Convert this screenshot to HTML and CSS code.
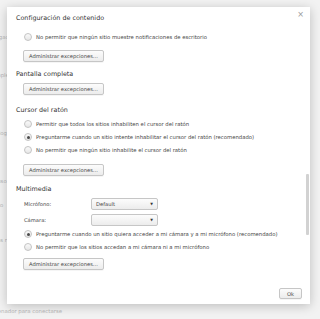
FILE: index.html
```html
<!DOCTYPE html>
<html lang="es">
<head>
    <meta charset="UTF-8">
    <meta name="viewport" content="width=device-width, initial-scale=1.0">
    <title>Configuración de contenido</title>
    <link rel="stylesheet" href="styles.css">
</head>
<body>
    <div class="page">
        <div class="page-line l1">Configuración de navegación</div>
        <div class="page-line l2">Pantalla completa</div>
        <div class="page-line l3">Bloquear registro de log</div>
        <div class="page-line l4">Acceso al uso</div>
        <div class="page-line l5">Acceso directo</div>
        <div class="page-line l6">Sitios permitidos r</div>
        <div class="page-line l7">Permitir a los sitios usar el ordenador para conectarse</div>
    </div>

    <div class="dialog">
        <div class="title">Configuración de contenido</div>
        <span class="close">×</span>

        <div class="section first">
            <label class="radio-row"><span class="radio"></span>No permitir que ningún sitio muestre notificaciones de escritorio</label>
            <button class="btn">Administrar excepciones...</button>
        </div>

        <div class="section fullscreen">
            <div class="heading">Pantalla completa</div>
            <button class="btn">Administrar excepciones...</button>
        </div>

        <div class="section cursor">
            <div class="heading">Cursor del ratón</div>
            <div class="radios">
                <label class="radio-row"><span class="radio"></span>Permitir que todos los sitios inhabiliten el cursor del ratón</label>
                <label class="radio-row"><span class="radio checked"></span>Preguntarme cuando un sitio intente inhabilitar el cursor del ratón (recomendado)</label>
                <label class="radio-row"><span class="radio"></span>No permitir que ningún sitio inhabilite el cursor del ratón</label>
            </div>
            <button class="btn">Administrar excepciones...</button>
        </div>

        <div class="section media">
            <div class="heading">Multimedia</div>
            <div class="field">
                <span class="field-label">Micrófono:</span>
                <div class="select"><span>Default</span><span class="arrow">▼</span></div>
            </div>
            <div class="field">
                <span class="field-label">Cámara:</span>
                <div class="select"><span></span><span class="arrow">▼</span></div>
            </div>
            <div class="radios">
                <label class="radio-row"><span class="radio checked"></span>Preguntarme cuando un sitio quiera acceder a mi cámara y a mi micrófono (recomendado)</label>
                <label class="radio-row"><span class="radio"></span>No permitir que los sitios accedan a mi cámara ni a mi micrófono</label>
            </div>
            <button class="btn">Administrar excepciones...</button>
        </div>

        <div class="footer">
            <button class="btn ok">Ok</button>
        </div>

        <div class="scroll-thumb"></div>
    </div>
</body>
</html>
```

FILE: styles.css
```css
body {
    margin: 0;
    background: #f2f2f2;
    font-family: "DejaVu Sans", sans-serif;
    width: 320px;
    height: 319px;
    overflow: hidden;
    position: relative;
}

.page {
    color: #b8b8b8;
    font-size: 5.4px;
    line-height: 8px;
}

.page-line {
    white-space: nowrap;
}

.l1 { margin: 33px 0 0 -62px; }
.l2 { margin: 30px 0 0 -34px; }
.l3 { margin: 50px 0 0 -58px; }
.l4 { margin: 40px 0 0 -30px; }
.l5 { margin: 16px 0 0 -36px; }
.l6 { margin: 27px 0 0 -42px; }
.l7 { margin: 63px 0 0 -84px; }

.dialog {
    position: absolute;
    left: 7px;
    top: 7px;
    width: 303px;
    height: 297px;
    background: #fff;
    box-shadow: 0 2px 10px rgba(0,0,0,0.22);
    padding: 0 0 0 9px;
    box-sizing: border-box;
    color: #333;
}

.title {
    margin-top: 6px;
    font-size: 6.4px;
    line-height: 10px;
    color: #333;
}

.close {
    position: absolute;
    right: 6px;
    top: 3px;
    font-size: 8px;
    color: #999;
}

.section {
    display: flex;
    flex-direction: column;
    align-items: flex-start;
}

.section.first {
    margin-top: 9px;
}

.heading {
    font-size: 6.4px;
    line-height: 10px;
}

.fullscreen .heading { margin-top: 7px; }
.cursor .heading { margin-top: 10px; }
.media .heading { margin-top: 8px; }

.radio-row {
    display: flex;
    align-items: center;
    height: 10px;
    padding-left: 8px;
    font-size: 5.3px;
    color: #444;
    white-space: nowrap;
}

.radio {
    width: 6px;
    height: 6px;
    border: 1px solid #c4c4c4;
    border-radius: 50%;
    background: linear-gradient(#fafafa, #e6e6e6);
    margin-right: 4px;
    box-sizing: content-box;
    display: flex;
    align-items: center;
    justify-content: center;
}

.radio.checked::after {
    content: "";
    width: 3px;
    height: 3px;
    border-radius: 50%;
    background: #4a4a4a;
}

.radios {
    display: flex;
    flex-direction: column;
    gap: 3px;
    margin-top: 4px;
}

.first .radio-row + .btn {
    margin-top: 8px;
}

.btn {
    font-family: "DejaVu Sans", sans-serif;
    font-size: 5.2px;
    color: #444;
    height: 12px;
    padding: 0 5px;
    margin-left: 7px;
    border: 1px solid #c6c6c6;
    border-radius: 2px;
    background: linear-gradient(#fcfcfc, #ececec);
    box-shadow: 0 1px 0 rgba(0,0,0,0.04);
}

.heading + .btn {
    margin-top: 4px;
}

.cursor .radios + .btn {
    margin-top: 9px;
}

.media .radios + .btn {
    margin-top: 6px;
}

.field {
    display: flex;
    align-items: center;
    height: 12px;
    margin-top: 4px;
    padding-left: 8px;
}

.field + .field {
    margin-top: 4px;
}

.field-label {
    width: 67px;
    font-size: 5.2px;
    color: #444;
}

.select {
    width: 67px;
    height: 12px;
    box-sizing: border-box;
    border: 1px solid #c6c6c6;
    border-radius: 2px;
    background: linear-gradient(#fcfcfc, #ececec);
    display: flex;
    align-items: center;
    justify-content: space-between;
    padding: 0 4px;
    font-size: 5.2px;
    color: #444;
}

.arrow {
    font-size: 3.5px;
    color: #333;
}

.field + .radios {
    margin-top: 3px;
}

.footer {
    display: flex;
    justify-content: flex-end;
    margin-top: 18px;
    padding-right: 8px;
}

.btn.ok {
    width: 23px;
    height: 11px;
    padding: 0;
    margin: 0;
}

.scroll-thumb {
    position: absolute;
    right: 1px;
    top: 167px;
    width: 3px;
    height: 61px;
    background: #d2d2d2;
    border-radius: 1px;
}
```
